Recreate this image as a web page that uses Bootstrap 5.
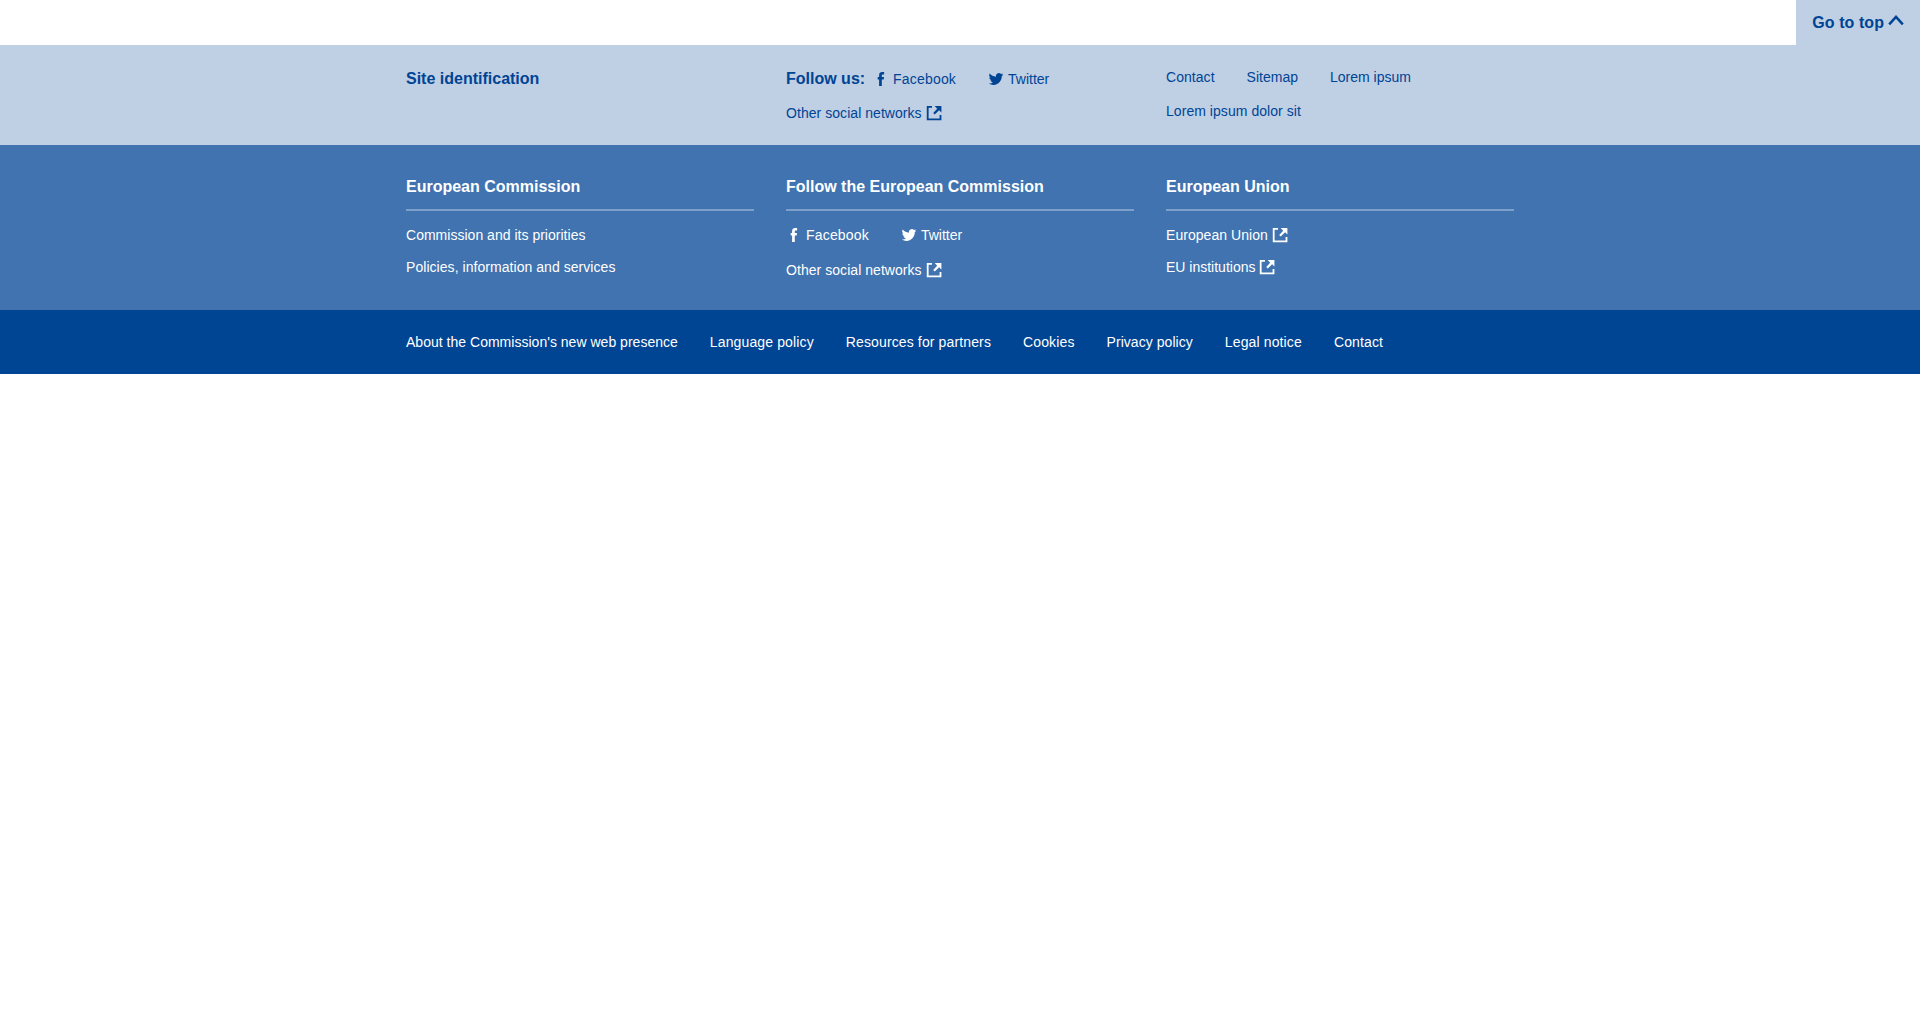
<!DOCTYPE html>
<html lang="en">
<head>
<meta charset="utf-8">
<meta name="viewport" content="width=device-width, initial-scale=1">
<title>Footer</title>
<link href="https://cdn.jsdelivr.net/npm/bootstrap@5.3.0/dist/css/bootstrap.min.css" rel="stylesheet">
<style>
body { font-family: "Liberation Sans", Arial, sans-serif; font-size: 14px; line-height: 24px; background: #fff; }
.ec-wrap { --bs-gutter-x: 32px; max-width: 1140px; }
.ec-wrap > .row { --bs-gutter-x: 32px; }
a { color: inherit; text-decoration: none; }
a:hover { text-decoration: underline; }
.ec-title { font-size: 16px; line-height: 24px; font-weight: 700; margin: 0; }
.ec-top { height: 45px; }
.ec-top a { background: #bfcfe4; color: #004494; padding: 11px 16px 10px; font-size: 16px; font-weight: 700; gap: 4px; letter-spacing: .06px; }
.ec-site { background: #bfcfe4; color: #004494; height: 100px; padding-top: 20px; }
.ec-site .row > .ec-low { padding-top: 2px; }
.ec-links { column-gap: 32px; row-gap: 10px; }
.ec-corp { background: #4073af; color: #fff; height: 165px; padding-top: 30px; }
.ec-corp .ec-title { border-bottom: 2px solid #7f9fcb; padding-bottom: 10px; margin-bottom: 12px; }
.ec-corp .ec-list { row-gap: 8px; }
.ec-corp .ec-list-social { row-gap: 11px; }
.ec-legal { background: #004494; color: #fff; padding: 20px 0; }
.ec-ico { display: inline-flex; align-items: center; gap: 4px; }
.ec-ico svg { width: 16px; height: 16px; fill: currentColor; flex: none; }
.ls-0 { letter-spacing: .018px; }
.ls-a { letter-spacing: .05px; }
.ls-b { letter-spacing: .13px; }
.ls-c { letter-spacing: .18px; }
</style>
<script src="https://cdn.jsdelivr.net/npm/bootstrap@5.3.0/dist/js/bootstrap.bundle.min.js"></script>
</head>
<body>
<svg class="d-none" aria-hidden="true">
  <symbol id="fb" viewBox="0 0 16 16"><path d="M11.100 1.100v2.400H9.800c-.8 0-1 .4-1 1v1.600H11l-.3 2.500H8.800V15H6.100V8.600H4.700V6.100h1.400V4.200C6.100 2.200 7.300 1 9.200 1c.8 0 1.600 0 1.900.1z"/></symbol>
  <symbol id="tw" viewBox="0 0 16 16"><path d="M15.300 3.400c-.5.200-1.100.4-1.700.5.6-.4 1.100-1 1.300-1.600-.6.300-1.200.6-1.900.7A3 3 0 0 0 7.900 5.700C5.400 5.600 3.200 4.400 1.700 2.600a3 3 0 0 0 .9 4c-.5 0-.9-.1-1.300-.4 0 1.500 1 2.700 2.400 3-.4.100-.9.100-1.300 0 .4 1.200 1.500 2.100 2.800 2.100A6 6 0 0 1 .8 12.500a8.500 8.500 0 0 0 13-7.500c.6-.4 1.100-1 1.500-1.600z"/></symbol>
  <symbol id="ext" viewBox="0 0 16 16"><path d="M.8 1H6v1.700H2.600v10.700h11V10h1.800v5.200H.8z"/><path d="M8.700.9h6.700v6.700l-2.300-2.300-4.400 4.200-1.500-1.500 4-4.300z"/></symbol>
</svg>

<div class="ec-top d-flex justify-content-end">
  <a href="#" class="d-flex">Go to top
    <svg width="16" height="20" viewBox="0 0 16 20" fill="none" stroke="currentColor" stroke-width="2.500"><path d="M1.200 13.300 8 5.800l6.800 7.500"/></svg></a>
</div>

<footer>
  <section class="ec-site">
    <div class="container ec-wrap">
      <div class="row">
        <div class="col-4 ec-low"><h2 class="ec-title">Site identification</h2></div>
        <div class="col-4 ec-low">
          <div class="ec-links d-flex flex-wrap">
            <div class="d-flex gap-2"><h2 class="ec-title">Follow us:</h2><a href="#" class="ec-ico ls-c"><svg><use href="#fb"/></svg>Facebook</a></div>
            <a href="#" class="ec-ico"><svg><use href="#tw"/></svg>Twitter</a>
            <a href="#" class="ec-ico ls-a">Other social networks<svg><use href="#ext"/></svg></a>
          </div>
        </div>
        <div class="col-4">
          <div class="ec-links d-flex flex-wrap">
            <a href="#" class="ls-a">Contact</a><a href="#">Sitemap</a><a href="#">Lorem ipsum</a><a href="#" class="ls-a">Lorem ipsum dolor sit</a>
          </div>
        </div>
      </div>
    </div>
  </section>

  <section class="ec-corp">
    <div class="container ec-wrap">
      <div class="row">
        <div class="col-4">
          <h2 class="ec-title">European Commission</h2>
          <div class="ec-list d-flex flex-column align-items-start">
            <a href="#" class="ls-0">Commission and its priorities</a><a href="#" class="ls-a">Policies, information and services</a>
          </div>
        </div>
        <div class="col-4">
          <h2 class="ec-title">Follow the European Commission</h2>
          <div class="ec-list-social d-flex flex-column align-items-start">
            <div class="ec-links d-flex">
              <a href="#" class="ec-ico ls-c"><svg><use href="#fb"/></svg>Facebook</a>
              <a href="#" class="ec-ico"><svg><use href="#tw"/></svg>Twitter</a>
            </div>
            <a href="#" class="ec-ico ls-a">Other social networks<svg><use href="#ext"/></svg></a>
          </div>
        </div>
        <div class="col-4">
          <h2 class="ec-title">European Union</h2>
          <div class="ec-list d-flex flex-column align-items-start">
            <a href="#" class="ec-ico ls-a">European Union<svg><use href="#ext"/></svg></a>
            <a href="#" class="ec-ico">EU institutions<svg><use href="#ext"/></svg></a>
          </div>
        </div>
      </div>
    </div>
  </section>

  <section class="ec-legal">
    <div class="container ec-wrap">
      <nav class="ec-links d-flex">
        <a href="#" class="ls-0">About the Commission's new web presence</a><a href="#" class="ls-b">Language policy</a><a href="#" class="ls-b">Resources for partners</a><a href="#" class="ls-b">Cookies</a><a href="#" class="ls-a">Privacy policy</a><a href="#" class="ls-b">Legal notice</a><a href="#" class="ls-b">Contact</a>
      </nav>
    </div>
  </section>
</footer>
</body>
</html>
